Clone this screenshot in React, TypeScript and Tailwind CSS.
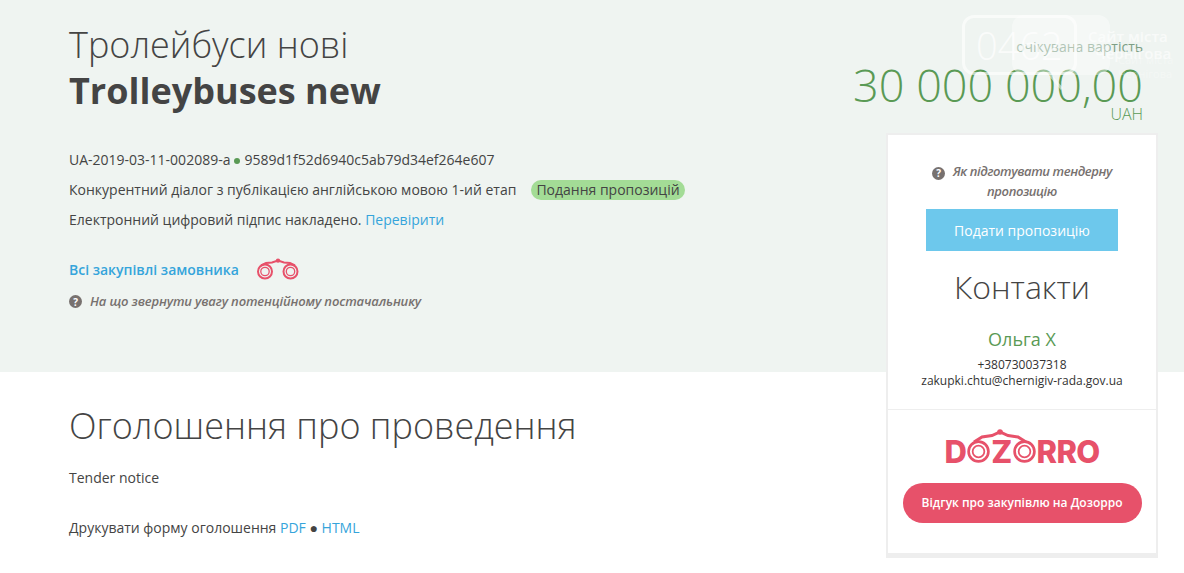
import React from "react";

const Q = () => (
  <span className="inline-flex w-[13px] h-[13px] rounded-full bg-[#77716f] text-white text-[10px] font-bold not-italic items-center justify-center leading-none shrink-0 align-[-1px]">?</span>
);

const Binoculars = ({ className }: { className?: string }) => (
  <svg viewBox="0 0 42 22" className={className} fill="none" stroke="#e7516a">
    <circle cx="8" cy="13.5" r="7" strokeWidth="2" />
    <circle cx="8" cy="13.5" r="4.2" strokeWidth="1.3" />
    <circle cx="33.5" cy="13.5" r="7" strokeWidth="2" />
    <circle cx="33.5" cy="13.5" r="4.2" strokeWidth="1.3" />
    <path d="M4 7.5 L9 5 L15 4.4 L21 2.6 L27 4.4 L33 5 L38 7.5" strokeWidth="2" />
    <circle cx="21" cy="2.6" r="2.2" fill="#e7516a" stroke="none" />
  </svg>
);

const Ring = () => (
  <svg viewBox="0 0 26 26" className="w-[23px] h-[23px] shrink-0 mx-[1px]" fill="none" stroke="#e7516a">
    <circle cx="13" cy="13" r="11.2" strokeWidth="3" />
    <circle cx="13" cy="13" r="6.6" strokeWidth="2" />
  </svg>
);

export default function App() {
  return (
    <div className="relative w-[1184px] h-[573px] overflow-hidden bg-white text-[#444] font-['Open_Sans',sans-serif] text-[14px]">
      {/* Hero */}
      <section className="h-[372px] bg-[#eff4f1] pl-[69px] pr-[41px] flex justify-between">
        <div className="pt-[22px]">
          <h1 className="text-[36px] leading-[46px] font-light text-[#444]">Тролейбуси нові</h1>
          <h2 className="text-[36px] leading-[45px] font-bold text-[#444]">Trolleybuses new</h2>
          <div className="mt-[32px] leading-[30px]">
            <p className="flex items-center">
              UA-2019-03-11-002089-a
              <span className="w-[6px] h-[6px] rounded-full bg-[#5a9a55] mx-[4px] mt-[2px]" />
              9589d1f52d6940c5ab79d34ef264e607
            </p>
            <p className="flex items-center">
              Конкурентний діалог з публікацією англійською мовою 1-ий етап
              <span className="ml-[15px] h-[20px] leading-[20px] px-[5px] rounded-[10px] bg-[#a3dc96]">Подання пропозицій</span>
            </p>
            <p>
              Електронний цифровий підпис накладено. <span className="text-[#35a4db]">Перевірити</span>
            </p>
          </div>
          <div className="mt-[19px] flex items-center h-[30px]">
            <span className="font-semibold text-[#35a4db]">Всі закупівлі замовника</span>
            <Binoculars className="ml-[18px] w-[42px] h-[22px]" />
          </div>
          <div className="mt-[8px] flex items-center gap-[8px] italic font-semibold text-[13px] text-[#77716f] tracking-[-0.15px]">
            <Q />
            На що звернути увагу потенційному постачальнику
          </div>
        </div>
        <div className="pt-[36px] text-right">
          <p className="text-[14px] leading-[22px] text-[#7d9f85]">очікувана вартість</p>
          <p className="text-[45px] leading-[56px] font-light text-[#5a9a55] -mt-[1px]">30 000 000,00</p>
          <p className="text-[16px] leading-[18px] font-light text-[#5a9a55] -mt-[8px]">UAH</p>
        </div>
      </section>

      {/* Body */}
      <section className="pl-[69px] pt-[31px]">
        <h2 className="text-[36px] leading-[46px] font-light text-[#444]">Оголошення про проведення</h2>
        <p className="mt-[19px] leading-[20px]">Tender notice</p>
        <p className="mt-[30px] leading-[20px]">
          Друкувати форму оголошення <span className="text-[#35a4db]">PDF</span> ● <span className="text-[#35a4db]">HTML</span>
        </p>
      </section>

      {/* Side card */}
      <aside className="absolute left-[886px] top-[133px] w-[272px] h-[425px] bg-white border-x-2 border-t-2 border-b-[5px] border-[#eeeeee] flex flex-col items-center">
        <div className="pt-[26px] w-[200px] text-center italic font-semibold text-[13px] leading-[20px] text-[#77716f] tracking-[-0.4px]">
          <Q /> <span className="ml-[5px]">Як підготувати тендерну пропозицію</span>
        </div>
        <button className="mt-[8px] w-[192px] h-[42px] bg-[#6dc8ec] text-white text-[14px]">Подати пропозицію</button>
        <h3 className="mt-[14px] text-[32px] leading-[44px] font-light text-[#444]">Контакти</h3>
        <p className="mt-[18px] text-[18px] leading-[24px] text-[#5a9a55]">Ольга Х</p>
        <p className="mt-[6px] text-[12px] leading-[16px] text-[#333]">+380730037318</p>
        <p className="text-[12px] leading-[16px] text-[#333]">zakupki.chtu@chernigiv-rada.gov.ua</p>
        <div className="mt-[20px] w-full border-t border-[#eeeeee] flex flex-col items-center">
          <div className="relative mt-[28px] h-[26px] flex items-center text-[#e7516a] font-['Inter',sans-serif] font-extrabold text-[31px] leading-none tracking-[-0.7px]">
            <span>D</span>
            <Ring />
            <span>Z</span>
            <Ring />
            <span>RRO</span>
            <svg viewBox="0 0 56 14" className="absolute left-[27px] -top-[9px] w-[56px] h-[14px]" fill="none" stroke="#e7516a">
              <path d="M2 13 L10 8 L20 6.5 L28 3 L36 6.5 L46 8 L54 13" strokeWidth="3" />
              <circle cx="28" cy="3" r="2.8" fill="#e7516a" stroke="none" />
            </svg>
          </div>
          <button className="mt-[19px] w-[239px] h-[40px] rounded-[20px] bg-[#e7516a] text-white font-semibold text-[12px]">Відгук про закупівлю на Дозорро</button>
        </div>
      </aside>

      {/* Watermark */}
      <div className="absolute left-[962px] top-[15px] w-[115px] h-[60px] rounded-[12px] border-[3px] border-white/60 pointer-events-none flex items-center text-white/70">
        <span className="pl-[11px] text-[38px] font-light leading-none">0462</span>
      </div>
      <svg viewBox="0 0 20 20" className="absolute left-[1048px] top-[73px] w-[20px] h-[20px] pointer-events-none" fill="none" stroke="#ffffff" strokeOpacity="0.5" strokeWidth="3">
        <path d="M2 2 L14 16" />
      </svg>
      <div className="absolute left-[1012px] top-[15px] w-[98px] h-[60px] rounded-[12px] bg-white/40 pointer-events-none" />
      <div className="absolute left-[1088px] top-[28px] text-white/60 text-[15px] leading-[17px] font-semibold pointer-events-none">
        <p>Сайт міста</p>
        <p className="pl-[7px]">Чернігова</p>
      </div>
      <div className="absolute left-[1118px] top-[53px] text-white/30 text-[11px] leading-[14px] pointer-events-none">
        <p>Сайт міста</p>
        <p>Чернігова</p>
      </div>
    </div>
  );
}
